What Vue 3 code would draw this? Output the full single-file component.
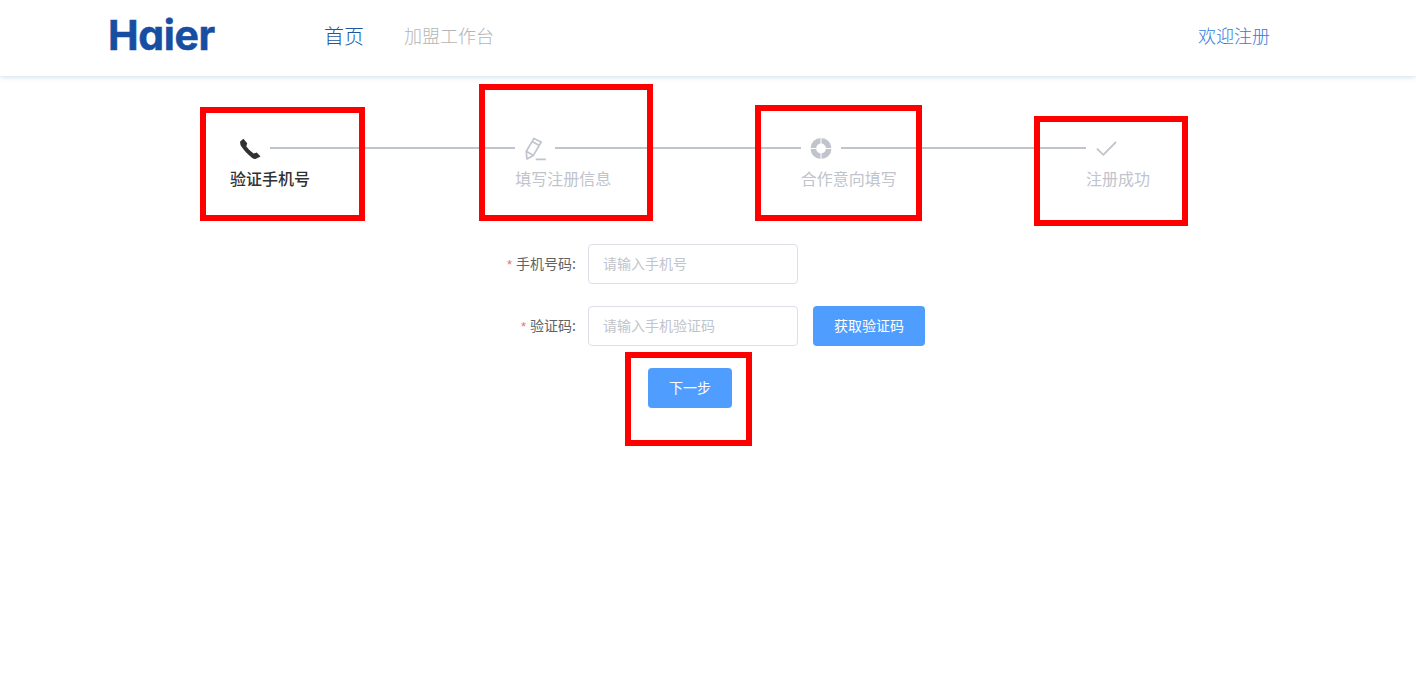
<template>
  <div class="page">
    <header class="header">
      <div class="logo">Haier</div>
      <nav class="nav">
        <a class="nav-item active">首页</a>
        <a class="nav-item">加盟工作台</a>
      </nav>
      <a class="welcome">欢迎注册</a>
    </header>

    <div class="steps">
      <div v-for="(step, index) in steps" :key="step.title" class="step" :class="{ active: index === current }">
        <div class="step-head">
          <div class="step-icon">
            <svg v-if="step.icon === 'phone'" width="25" height="25" viewBox="0 0 25 25">
              <path
                d="M5.4 2.8 2.2 5.5Q1.8 8.2 3.4 10.6C6 14.6 10 18.9 14.2 22Q16.4 23.4 18 22.8L22.5 20.4 18.8 16.5 15.6 17.5Q11.4 14.6 8.3 10.5L9.2 7.2Z"
                fill="currentColor"
              />
            </svg>
            <svg v-else-if="step.icon === 'edit'" width="25" height="25" viewBox="0 0 25 25" fill="none" stroke="currentColor" stroke-width="1.7" stroke-linejoin="round">
              <path d="M11 2.4 18.2 6 10.4 19.4 3.9 22.9 3.3 15.3Z" />
              <path d="M9.2 5.6 16.3 9.4M3.3 15.3 10.4 19.4M12.8 23.3H22.8" />
            </svg>
            <svg v-else-if="step.icon === 'help'" width="25" height="25" viewBox="0 0 25 25" fill="none" stroke="currentColor">
              <circle cx="13" cy="12.5" r="7.7" stroke-width="5.6" />
              <path d="M13 1V8M13 17V24M1 12.5H8M17 12.5H25" stroke="#fff" stroke-width="1" />
            </svg>
            <svg v-else width="25" height="25" viewBox="0 0 25 25" fill="none" stroke="currentColor" stroke-width="1.8">
              <path d="M3.9 12.6 10.3 18.8 23 6" />
            </svg>
          </div>
          <div v-if="index < steps.length - 1" class="step-line"></div>
        </div>
        <div class="step-title">{{ step.title }}</div>
      </div>
    </div>

    <form class="form" @submit.prevent="nextStep">
      <div class="form-item">
        <label for="phone"><i>*</i>手机号码:</label>
        <input id="phone" v-model.trim="form.phone" type="text" placeholder="请输入手机号" />
      </div>
      <div class="form-item">
        <label for="code"><i>*</i>验证码:</label>
        <input id="code" v-model.trim="form.code" type="text" placeholder="请输入手机验证码" />
        <button type="button" class="btn code-btn">获取验证码</button>
      </div>
      <button type="submit" class="btn next-btn">下一步</button>
    </form>

    <!-- 标注框 -->
    <div class="mark mark-phone"></div>
    <div class="mark mark-info"></div>
    <div class="mark mark-intent"></div>
    <div class="mark mark-done"></div>
    <div class="mark mark-next"></div>
  </div>
</template>

<script setup>
import { reactive, ref } from 'vue'

const steps = [
  { title: '验证手机号', icon: 'phone' },
  { title: '填写注册信息', icon: 'edit' },
  { title: '合作意向填写', icon: 'help' },
  { title: '注册成功', icon: 'check' },
]

const current = ref(0)

const form = reactive({
  phone: '',
  code: '',
})

const nextStep = () => {
  if (form.phone && form.code && current.value < steps.length - 1) {
    current.value += 1
  }
}
</script>

<style>
body {
  margin: 0;
  background: #fff;
}
</style>

<style scoped>
.page {
  position: relative;
  height: 677px;
  overflow: hidden;
  font-family: 'Noto Sans CJK SC', sans-serif;
  font-size: 14px;
}

.header {
  display: flex;
  align-items: center;
  box-sizing: border-box;
  height: 76px;
  padding: 0 146px 6px 107px;
  background: #fff;
  box-shadow: 0 1px 5px rgba(90, 145, 190, 0.3);
}

.logo {
  width: 217px;
  color: #174ea2;
  font-family: Inter, sans-serif;
  font-size: 41px;
  font-weight: 700;
  font-feature-settings: 'cv11', 'ss03';
  letter-spacing: -0.4px;
  line-height: 70px;
  text-indent: 1px;
  -webkit-text-stroke: 0.5px #174ea2;
}

.nav {
  display: flex;
  align-items: center;
  flex: 1;
  gap: 40px;
}

.nav-item {
  color: #b5b5b5;
  font-size: 18px;
  font-weight: 300;
}

.nav-item.active {
  color: #1c57a0;
  font-size: 20px;
}

.welcome {
  color: #2f7ce0;
  font-size: 18px;
  font-weight: 300;
}

.steps {
  display: flex;
  margin: 60px 266px 0 230px;
}

.step {
  width: 285.4px;
  color: #c0c4cc;
}

.step:last-child {
  width: 64px;
}

.step.active {
  color: #303133;
}

.step-head {
  display: flex;
  align-items: center;
  height: 24px;
}

.step-icon {
  display: flex;
  justify-content: center;
  flex: 0 0 40px;
}

.step-line {
  flex: 1;
  height: 2px;
  background: #c0c4cc;
}

.step-title {
  font-size: 16px;
  line-height: 36px;
  white-space: nowrap;
}

.step.active .step-title {
  font-weight: 500;
}

.form {
  display: flex;
  flex-direction: column;
  align-items: flex-start;
  gap: 22px;
  margin: 48px 0 0 488px;
}

.form-item {
  display: flex;
  align-items: center;
  height: 40px;
}

.form-item label {
  box-sizing: border-box;
  width: 100px;
  padding-right: 12px;
  color: #606266;
  line-height: 40px;
  text-align: right;
}

.form-item label i {
  margin-right: 4px;
  color: #f56c6c;
  font-family: 'Liberation Sans', sans-serif;
  font-size: 13px;
  font-style: normal;
}

.form-item input {
  box-sizing: border-box;
  width: 210px;
  height: 40px;
  padding: 0 14px 2px;
  border: 1px solid #dcdfe6;
  border-radius: 4px;
  outline: none;
  background: #fff;
  color: #606266;
  font: inherit;
}

.form-item input::placeholder {
  color: #c0c4cc;
}

.btn {
  height: 40px;
  padding: 0 0 2px;
  border: none;
  border-radius: 4px;
  background: #4e9dff;
  color: #fff;
  font: inherit;
  cursor: pointer;
}

.code-btn {
  width: 112px;
  margin-left: 15px;
}

.next-btn {
  width: 84px;
  margin-left: 160px;
}

.mark {
  position: absolute;
  box-sizing: border-box;
  border: 6px solid #fe0000;
  pointer-events: none;
}

.mark-phone {
  top: 107px;
  left: 200px;
  width: 165px;
  height: 114px;
}

.mark-info {
  top: 84px;
  left: 479px;
  width: 174px;
  height: 137px;
}

.mark-intent {
  top: 105px;
  left: 755px;
  width: 167px;
  height: 116px;
}

.mark-done {
  top: 116px;
  left: 1034px;
  width: 154px;
  height: 110px;
}

.mark-next {
  top: 352px;
  left: 625px;
  width: 127px;
  height: 94px;
}
</style>
